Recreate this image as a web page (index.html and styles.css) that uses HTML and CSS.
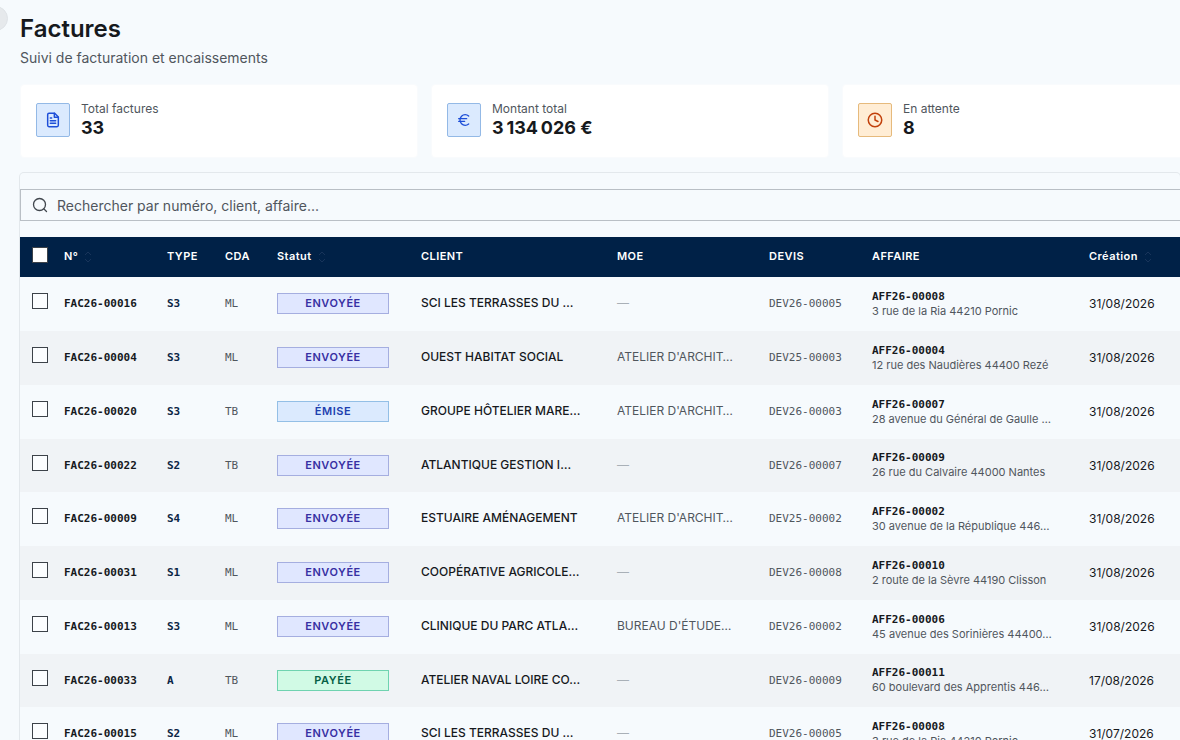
FILE: index.html
```html
<!DOCTYPE html>
<html lang="fr">
<head>
    <meta charset="UTF-8">
    <meta name="viewport" content="width=device-width, initial-scale=1.0">
    <title>Factures</title>
    <link rel="stylesheet" href="styles.css">
</head>
<body>

    <button class="sidebar-toggle" type="button" aria-label="Menu"></button>

    <main class="page">
        <header class="page-header">
            <h1>Factures</h1>
            <p>Suivi de facturation et encaissements</p>
        </header>

        <section class="stats">
            <div class="stat">
                <div class="stat-icon blue">
                    <svg width="16" height="16" viewBox="0 0 24 24" fill="none" stroke="currentColor" stroke-width="2.2" stroke-linecap="round" stroke-linejoin="round">
                        <path d="M14.5 2H6a2 2 0 0 0-2 2v16a2 2 0 0 0 2 2h12a2 2 0 0 0 2-2V7.500z"/>
                        <path d="M14 2v6h6M8 9h2M8 13h8M8 17h8"/>
                    </svg>
                </div>
                <div>
                    <div class="stat-label">Total factures</div>
                    <div class="stat-value">33</div>
                </div>
            </div>
            <div class="stat">
                <div class="stat-icon blue">
                    <svg width="16" height="16" viewBox="0 0 24 24" fill="none" stroke="currentColor" stroke-width="2" stroke-linecap="round" stroke-linejoin="round">
                        <path d="M4 10h12M4 14h9M19 6a7.700 7.700 0 0 0-5.200-2A7.900 7.900 0 0 0 6 12c0 4.400 3.500 8 7.800 8 2 0 3.800-.8 5.200-2"/>
                    </svg>
                </div>
                <div>
                    <div class="stat-label">Montant total</div>
                    <div class="stat-value">3&#8239;134&#8239;026&nbsp;€</div>
                </div>
            </div>
            <div class="stat">
                <div class="stat-icon orange">
                    <svg width="18" height="18" viewBox="0 0 24 24" fill="none" stroke="currentColor" stroke-width="2" stroke-linecap="round" stroke-linejoin="round">
                        <circle cx="12" cy="12" r="9"/>
                        <path d="M12 7v5l4 2"/>
                    </svg>
                </div>
                <div>
                    <div class="stat-label">En attente</div>
                    <div class="stat-value">8</div>
                </div>
            </div>
        </section>

        <section class="panel">
            <label class="search">
                <svg width="16" height="16" viewBox="0 0 16 16" fill="none" stroke="currentColor" stroke-width="1.3" stroke-linecap="round">
                    <circle cx="7.500" cy="7.500" r="6"/>
                    <path d="M12 12l2.500 2.500"/>
                </svg>
                <input type="text" placeholder="Rechercher par numéro, client, affaire..." aria-label="Rechercher">
            </label>

            <table>
                <colgroup>
                    <col class="c-check"><col class="c-num"><col class="c-type"><col class="c-cda"><col class="c-statut">
                    <col class="c-client"><col class="c-moe"><col class="c-devis"><col class="c-affaire"><col>
                </colgroup>
                <thead>
                    <tr>
                        <th><input type="checkbox" aria-label="Tout sélectionner"></th>
                        <th>N° <svg class="sort" viewBox="0 0 10 12"><path d="M2 4l3-3 3 3M2 8l3 3 3-3"/></svg></th>
                        <th>TYPE</th>
                        <th>CDA</th>
                        <th>Statut <svg class="sort" viewBox="0 0 10 12"><path d="M2 4l3-3 3 3M2 8l3 3 3-3"/></svg></th>
                        <th>CLIENT</th>
                        <th>MOE</th>
                        <th>DEVIS</th>
                        <th>AFFAIRE</th>
                        <th>Création <svg class="sort" viewBox="0 0 10 12"><path d="M2 4l3-3 3 3M2 8l3 3 3-3"/></svg></th>
                    </tr>
                </thead>
                <tbody>
                    <tr>
                        <td><input type="checkbox" aria-label="FAC26-00016"></td>
                        <td class="num">FAC26-00016</td>
                        <td class="type">S3</td>
                        <td class="mono">ML</td>
                        <td><span class="badge envoyee">ENVOYÉE</span></td>
                        <td class="client">SCI LES TERRASSES DU …</td>
                        <td class="none">—</td>
                        <td class="mono">DEV26-00005</td>
                        <td class="affaire"><b>AFF26-00008</b><span>3 rue de la Ria 44210 Pornic</span></td>
                        <td class="date">31/08/2026</td>
                    </tr>
                    <tr>
                        <td><input type="checkbox" aria-label="FAC26-00004"></td>
                        <td class="num">FAC26-00004</td>
                        <td class="type">S3</td>
                        <td class="mono">ML</td>
                        <td><span class="badge envoyee">ENVOYÉE</span></td>
                        <td class="client">OUEST HABITAT SOCIAL</td>
                        <td class="moe">ATELIER D'ARCHIT…</td>
                        <td class="mono">DEV25-00003</td>
                        <td class="affaire"><b>AFF26-00004</b><span>12 rue des Naudières 44400 Rezé</span></td>
                        <td class="date">31/08/2026</td>
                    </tr>
                    <tr>
                        <td><input type="checkbox" aria-label="FAC26-00020"></td>
                        <td class="num">FAC26-00020</td>
                        <td class="type">S3</td>
                        <td class="mono">TB</td>
                        <td><span class="badge emise">ÉMISE</span></td>
                        <td class="client">GROUPE HÔTELIER MARE…</td>
                        <td class="moe">ATELIER D'ARCHIT…</td>
                        <td class="mono">DEV26-00003</td>
                        <td class="affaire"><b>AFF26-00007</b><span>28 avenue du Général de Gaulle …</span></td>
                        <td class="date">31/08/2026</td>
                    </tr>
                    <tr>
                        <td><input type="checkbox" aria-label="FAC26-00022"></td>
                        <td class="num">FAC26-00022</td>
                        <td class="type">S2</td>
                        <td class="mono">TB</td>
                        <td><span class="badge envoyee">ENVOYÉE</span></td>
                        <td class="client">ATLANTIQUE GESTION I…</td>
                        <td class="none">—</td>
                        <td class="mono">DEV26-00007</td>
                        <td class="affaire"><b>AFF26-00009</b><span>26 rue du Calvaire 44000 Nantes</span></td>
                        <td class="date">31/08/2026</td>
                    </tr>
                    <tr>
                        <td><input type="checkbox" aria-label="FAC26-00009"></td>
                        <td class="num">FAC26-00009</td>
                        <td class="type">S4</td>
                        <td class="mono">ML</td>
                        <td><span class="badge envoyee">ENVOYÉE</span></td>
                        <td class="client">ESTUAIRE AMÉNAGEMENT</td>
                        <td class="moe">ATELIER D'ARCHIT…</td>
                        <td class="mono">DEV25-00002</td>
                        <td class="affaire"><b>AFF26-00002</b><span>30 avenue de la République 446…</span></td>
                        <td class="date">31/08/2026</td>
                    </tr>
                    <tr>
                        <td><input type="checkbox" aria-label="FAC26-00031"></td>
                        <td class="num">FAC26-00031</td>
                        <td class="type">S1</td>
                        <td class="mono">ML</td>
                        <td><span class="badge envoyee">ENVOYÉE</span></td>
                        <td class="client">COOPÉRATIVE AGRICOLE…</td>
                        <td class="none">—</td>
                        <td class="mono">DEV26-00008</td>
                        <td class="affaire"><b>AFF26-00010</b><span>2 route de la Sèvre 44190 Clisson</span></td>
                        <td class="date">31/08/2026</td>
                    </tr>
                    <tr>
                        <td><input type="checkbox" aria-label="FAC26-00013"></td>
                        <td class="num">FAC26-00013</td>
                        <td class="type">S3</td>
                        <td class="mono">ML</td>
                        <td><span class="badge envoyee">ENVOYÉE</span></td>
                        <td class="client">CLINIQUE DU PARC ATLA…</td>
                        <td class="moe">BUREAU D'ÉTUDE…</td>
                        <td class="mono">DEV26-00002</td>
                        <td class="affaire"><b>AFF26-00006</b><span>45 avenue des Sorinières 44400…</span></td>
                        <td class="date">31/08/2026</td>
                    </tr>
                    <tr>
                        <td><input type="checkbox" aria-label="FAC26-00033"></td>
                        <td class="num">FAC26-00033</td>
                        <td class="type">A</td>
                        <td class="mono">TB</td>
                        <td><span class="badge payee">PAYÉE</span></td>
                        <td class="client">ATELIER NAVAL LOIRE CO…</td>
                        <td class="none">—</td>
                        <td class="mono">DEV26-00009</td>
                        <td class="affaire"><b>AFF26-00011</b><span>60 boulevard des Apprentis 446…</span></td>
                        <td class="date">17/08/2026</td>
                    </tr>
                    <tr>
                        <td><input type="checkbox" aria-label="FAC26-00015"></td>
                        <td class="num">FAC26-00015</td>
                        <td class="type">S2</td>
                        <td class="mono">ML</td>
                        <td><span class="badge envoyee">ENVOYÉE</span></td>
                        <td class="client">SCI LES TERRASSES DU …</td>
                        <td class="none">—</td>
                        <td class="mono">DEV26-00005</td>
                        <td class="affaire"><b>AFF26-00008</b><span>3 rue de la Ria 44210 Pornic</span></td>
                        <td class="date">31/07/2026</td>
                    </tr>
                </tbody>
            </table>
        </section>
    </main>

</body>
</html>
```
FILE: styles.css
```css
* {
    box-sizing: border-box;
}
html, body {
    margin: 0;
    height: 100%;
    overflow: hidden;
}
body {
    position: relative;
    font-family: Inter, sans-serif;
    font-size: 12px;
    color: #16191d;
    background-color: #f6fafd;
}
h1, p {
    margin: 0;
}
.sidebar-toggle {
    position: absolute;
    top: 6px;
    left: -17px;
    width: 25px;
    height: 25px;
    padding: 0;
    border: 1px solid #dfe3e7;
    border-radius: 50%;
    background-color: #e6e9ec;
}
.page {
    padding: 13px 0 0 20px;
}
.page-header h1 {
    font-size: 24px;
    font-weight: 600;
    line-height: 32px;
}
.page-header p {
    margin-top: 3px;
    font-size: 14px;
    line-height: 20px;
    color: #50565d;
}

/* stat cards */
.stats {
    display: grid;
    grid-auto-flow: column;
    grid-auto-columns: 398px;
    gap: 13px;
    margin-top: 16px;
}
.stat {
    display: flex;
    align-items: center;
    gap: 11px;
    height: 74px;
    padding: 0 15px 2px;
    border: 1px solid #f9fbfd;
    border-radius: 4px;
    background-color: #fff;
}
.stat-icon {
    display: flex;
    align-items: center;
    justify-content: center;
    width: 34px;
    height: 34px;
    border: 1px solid;
    border-radius: 2px;
}
.stat-icon.blue {
    color: #1d4ed8;
    border-color: #93b9e6;
    background-color: #dbeafe;
}
.stat-icon.orange {
    color: #c2410c;
    border-color: #e6ba7c;
    background-color: #ffedd5;
}
.stat-label {
    font-size: 12px;
    line-height: 16px;
    color: #50565d;
}
.stat-value {
    font-size: 18px;
    font-weight: 700;
    line-height: 22px;
}

/* table panel */
.panel {
    margin-top: 15px;
    padding-top: 16px;
    border-radius: 4px;
    box-shadow: 0 0 0 1px #e3e8ec;
}
.search {
    display: flex;
    align-items: center;
    gap: 9px;
    height: 32px;
    padding-left: 11px;
    border: 1px solid #b9bfc5;
    border-right: none;
    color: #41474e;
}
.search input {
    flex: 1;
    padding: 0;
    border: none;
    outline: none;
    background: none;
    font: inherit;
    font-size: 14px;
}
.search input::placeholder {
    color: #50565d;
}
table {
    width: 100%;
    margin-top: 16px;
    table-layout: fixed;
    border-collapse: collapse;
}
.c-check { width: 32px; }
.c-num { width: 103px; }
.c-type { width: 58px; }
.c-cda { width: 52px; }
.c-statut { width: 144px; }
.c-client { width: 196px; }
.c-moe { width: 152px; }
.c-devis { width: 103px; }
.c-affaire { width: 217px; }
th, td {
    padding: 0 0 0 12px;
    text-align: left;
    white-space: nowrap;
}
th {
    height: 40px;
    padding-bottom: 2px;
    font-size: 11px;
    font-weight: 600;
    letter-spacing: 0.04em;
    color: #fff;
    background-color: #002147;
}
td {
    height: 54px;
    padding-bottom: 1px;
}
tbody tr:nth-child(4n) td {
    height: 53px;
}
tbody tr:nth-child(even) {
    background-color: #f0f3f6;
}
.sort {
    width: 10px;
    height: 12px;
    margin-left: 2px;
    vertical-align: middle;
    fill: none;
    stroke: #18345a;
}
input[type="checkbox"] {
    appearance: none;
    display: block;
    width: 16px;
    height: 16px;
    margin: 0 0 5px;
    border: 1px solid #3c4249;
    background-color: #fbfdff;
}
th input[type="checkbox"] {
    margin-bottom: 3px;
    background-color: #fff;
}
.num, .type, .mono, .affaire b {
    font-family: "DejaVu Sans Mono", monospace;
    font-size: 11px;
}
.num, .affaire b {
    font-weight: 700;
}
.type {
    font-weight: 700;
    color: #0b2545;
}
.mono {
    color: #50565d;
}
.badge {
    display: block;
    width: 112px;
    height: 21px;
    border: 1px solid;
    font-size: 11px;
    font-weight: 600;
    line-height: 19px;
    letter-spacing: 0.05em;
    text-align: center;
}
.badge.envoyee {
    color: #3730a3;
    border-color: #a5aee0;
    background-color: #e0e7ff;
}
.badge.emise {
    color: #1e40af;
    border-color: #93bfe6;
    background-color: #dbeafe;
}
.badge.payee {
    color: #065f46;
    border-color: #6fd3b0;
    background-color: #d1fae5;
}
.client, .moe, .none {
    padding-bottom: 3px;
}
.client {
    font-weight: 500;
}
.moe {
    color: #50565d;
}
.none {
    color: #a9b0b7;
}
.affaire b, .affaire span {
    display: block;
    line-height: 14px;
}
.affaire span {
    font-size: 11px;
    color: #50565d;
}
```
